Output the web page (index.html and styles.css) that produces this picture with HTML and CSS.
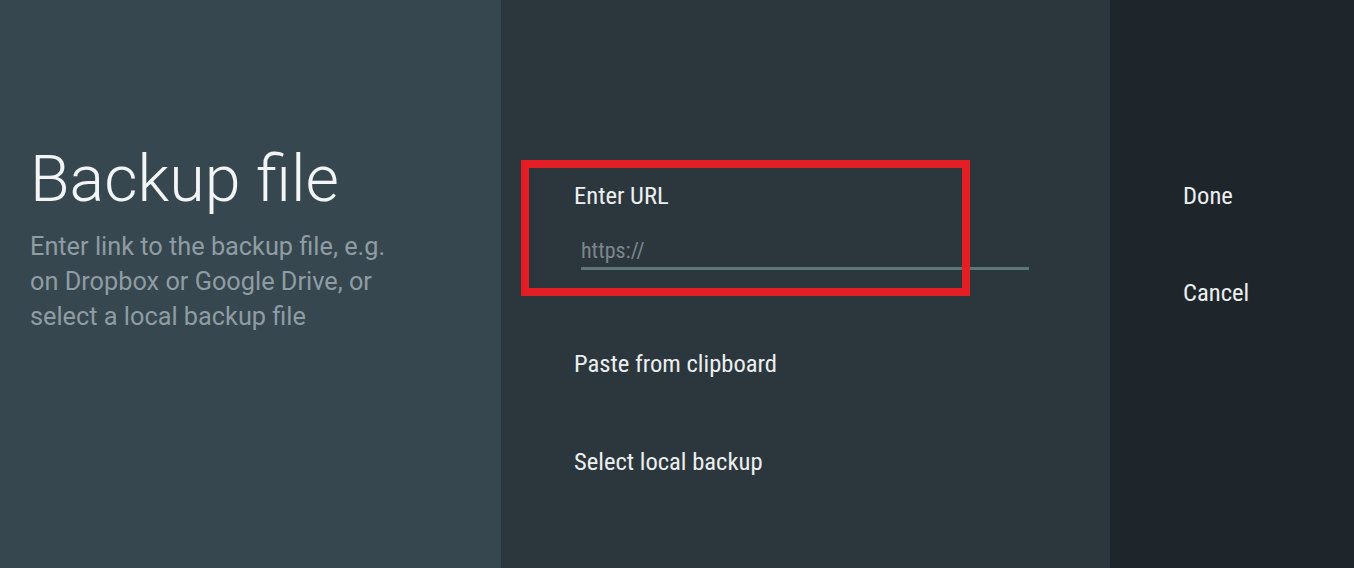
FILE: index.html
```html
<!DOCTYPE html>
<html>
<head>
<meta charset="utf-8">
<link rel="stylesheet" href="styles.css">
</head>
<body>
<div class="screen">
  <section class="info">
    <h1 class="title">Backup file</h1>
    <p class="desc">Enter link to the backup file, e.g. on Dropbox or Google Drive, or select a local backup file</p>
  </section>
  <section class="options">
    <div class="url-item">
      <div class="item-label">Enter URL</div>
      <div class="url-field"><span class="placeholder">https://</span></div>
      <div class="focus-box"></div>
    </div>
    <div class="item">Paste from clipboard</div>
    <div class="item">Select local backup</div>
  </section>
  <section class="actions">
    <div class="action">Done</div>
    <div class="action">Cancel</div>
  </section>
</div>
</body>
</html>
```
FILE: styles.css
```css
* { box-sizing: border-box; }
html, body { margin: 0; padding: 0; }
body {
  width: 1354px;
  height: 568px;
  overflow: hidden;
  font-family: Roboto, "Noto Sans", sans-serif;
}
.screen {
  display: flex;
  height: 568px;
}
.info {
  width: 501px;
  background: #37474f;
  padding: 141px 20px 0 30px;
}
.title {
  margin: 0;
  font-weight: 300;
  font-size: 64.6px;
  line-height: 76px;
  color: #f2f4f5;
  letter-spacing: 0;
}
.desc {
  margin: 12px 0 0;
  font-size: 25.3px;
  line-height: 35px;
  color: #8f9ca3;
  width: 380px;
}
.options {
  width: 609px;
  background: #2c373d;
  padding: 178px 0 0 73px;
  display: flex;
  flex-direction: column;
}
.url-item {
  position: relative;
  height: 168px;
}
.item-label, .item, .action {
  font-family: "Roboto Condensed", "Liberation Sans Narrow", Roboto, sans-serif;
  font-stretch: condensed;
  font-size: 24.6px;
  line-height: 36px;
  color: #eceff1;
}
.url-field {
  margin: 18px 0 0 7px;
  width: 448px;
  border-bottom: 3px solid #5d7779;
  height: 38px;
  padding-top: 4px;
}
.placeholder {
  font-family: "Roboto Condensed", "Liberation Sans Narrow", Roboto, sans-serif;
  font-stretch: condensed;
  font-size: 22px;
  line-height: 30px;
  color: #7b878c;
}
.focus-box {
  position: absolute;
  left: -53px;
  top: -18px;
  width: 449px;
  height: 136px;
  border: 8px solid #e31e25;
}
.item {
  height: 98px;
}
.actions {
  flex: 1;
  background: #1f262b;
  padding: 178px 0 0 73px;
  display: flex;
  flex-direction: column;
}
.action {
  height: 97px;
}
```
